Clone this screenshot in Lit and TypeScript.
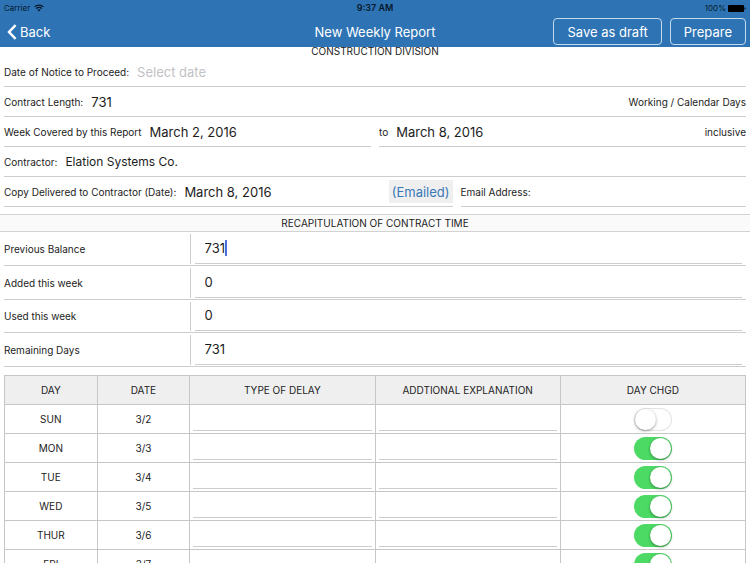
import { LitElement, html, css, svg } from "lit";
import { customElement, property } from "lit/decorators.js";

const font = css`
  *, *::before { box-sizing: border-box; }
  input, button { font: inherit; color: inherit; margin: 0; border-radius: 0; }
`;

@customElement("status-bar")
class StatusBar extends LitElement {
  static styles = css`
    :host {
      display: grid;
      grid-template-columns: 1fr auto 1fr;
      align-items: center;
      height: 16px;
      padding: 0 4px;
      font-size: 8px;
      line-height: 16px;
      color: #06182b;
    }
    .side { display: flex; align-items: center; gap: 4px; }
    .end { justify-content: flex-end; gap: 2px; }
    .time { font-size: 9px; font-weight: 600; }
  `;
  render() {
    return html`
      <div class="side">
        <span>Carrier</span>
        <svg width="10" height="8" viewBox="0 0 10 8" aria-label="Wi-Fi">
          ${svg`<path d="M.6 2.9a6.2 6.2 0 0 1 8.8 0M2.2 4.6a4 4 0 0 1 5.6 0" fill="none" stroke="currentColor" stroke-width="1.3"/>
          <path d="M5 7.6 3.4 5.9a2.3 2.3 0 0 1 3.2 0Z" fill="currentColor"/>`}
        </svg>
      </div>
      <span class="time">9:37 AM</span>
      <div class="side end">
        <span>100%</span>
        <svg width="18" height="7" viewBox="0 0 18 7" aria-label="Battery full">
          ${svg`<rect x="0" y="0" width="16" height="7" rx="1" fill="#000"/>
          <path d="M16.5 2.2c1.3.3 1.3 2.3 0 2.6Z" fill="#000"/>`}
        </svg>
      </div>
    `;
  }
}

@customElement("nav-bar")
class NavBar extends LitElement {
  static styles = [font, css`
    :host {
      display: grid;
      grid-template-columns: 1fr auto 1fr;
      align-items: center;
      height: 31px;
      padding: 0 4px;
      font-size: 13px;
      color: #fff;
    }
    .title { font-size: 13px; font-weight: 400; margin: 0; }
    .back {
      display: flex;
      align-items: center;
      justify-self: start;
      gap: 3px;
      padding: 0 3px;
      border: 0;
      background: none;
      color: #fff;
    }
    .actions { display: flex; justify-content: flex-end; gap: 8px; }
    .action {
      height: 27px;
      padding: 0 13px;
      border: 1px solid #c4daee;
      border-radius: 4px;
      background: none;
      color: #fff;
      white-space: nowrap;
    }
  `];
  render() {
    return html`
      <button class="back">
        <svg width="10" height="16" viewBox="0 0 10 16" aria-hidden="true">
          ${svg`<path d="M8.6 1.2 2 8l6.6 6.8" fill="none" stroke="currentColor" stroke-width="2.4"/>`}
        </svg>
        Back
      </button>
      <h1 class="title">New Weekly Report</h1>
      <div class="actions">
        <button class="action">Save as draft</button>
        <button class="action">Prepare</button>
      </div>
    `;
  }
}

@customElement("report-field")
class ReportField extends LitElement {
  @property() label = "";
  @property() value = "";
  @property() hint = "";
  @property() suffix = "";
  @property() action = "";
  @property({ type: Boolean }) prose = false;

  static styles = [font, css`
    :host { display: block; min-width: 0; }
    .field {
      display: flex;
      align-items: center;
      gap: 8px;
      height: 30px;
      border-bottom: 1px solid #cdcdcd;
    }
    .label, .suffix { white-space: nowrap; }
    .input {
      flex: 1;
      min-width: 0;
      height: 24px;
      padding: 0;
      border: 0;
      outline: 0;
      background: none;
      font-size: 13px;
    }
    .prose { font-size: 12px; }
    .input::placeholder { color: #c2c2c6; opacity: 1; }
    .action {
      height: 23px;
      padding: 0 3px;
      border: 0;
      background: #efeff0;
      color: #3a78b8;
      font-size: 13px;
    }
  `];
  render() {
    return html`
      <div class="field">
        <label class="label" for="value">${this.label}</label>
        <input class="input ${this.prose ? "prose" : ""}" id="value" .value=${this.value} placeholder=${this.hint} />
        ${this.suffix ? html`<span class="suffix">${this.suffix}</span>` : ""}
        ${this.action ? html`<button class="action">${this.action}</button>` : ""}
      </div>
    `;
  }
}

const balances = [
  { label: "Previous Balance", value: "731", active: true },
  { label: "Added this week", value: "0", active: false },
  { label: "Used this week", value: "0", active: false },
  { label: "Remaining Days", value: "731", active: false },
];

const days = [
  { day: "SUN", date: "3/2", charged: false },
  { day: "MON", date: "3/3", charged: true },
  { day: "TUE", date: "3/4", charged: true },
  { day: "WED", date: "3/5", charged: true },
  { day: "THUR", date: "3/6", charged: true },
  { day: "FRI", date: "3/7", charged: true },
  { day: "SAT", date: "3/8", charged: true },
];

@customElement("app-root")
class AppRoot extends LitElement {
  static styles = [font, css`
    :host {
      display: flex;
      flex-direction: column;
      height: 100vh;
      background: #fff;
      color: #1c1c1c;
      font: 10px/16px Inter, "Liberation Sans", sans-serif;
    }
    .top { background: #2e74b5; }
    .report {
      flex: 1;
      min-height: 0;
      overflow: hidden auto;
      scrollbar-width: none;
    }
    .division {
      margin: 0;
      padding-bottom: 2px;
      font-size: 10px;
      font-weight: 400;
      line-height: 8px;
      text-align: center;
    }
    .fields { padding: 0 4px; }
    .pair { display: grid; grid-template-columns: 1fr 1fr; column-gap: 8px; }
    .copy { grid-template-columns: 11fr 7fr; }
    .section {
      margin: 7px 0 0;
      height: 18px;
      border-top: 1px solid #d2d2d2;
      border-bottom: 1px solid #d2d2d2;
      background: #fafafa;
      font-size: 10px;
      font-weight: 400;
      text-align: center;
    }
    .balances {
      display: grid;
      grid-template-rows: repeat(4, 1fr);
      height: 135px;
      padding: 0 4px;
    }
    .balance {
      display: grid;
      grid-template-columns: 1fr 3fr;
      padding: 2px 0 1px;
      border-bottom: 1px solid #cdcdcd;
    }
    .name { align-self: center; }
    .amount { display: flex; padding: 0 4px; border-left: 1px solid #cdcdcd; }
    .entry {
      flex: 1;
      display: flex;
      align-items: center;
      padding: 0 10px 1px;
      border-bottom: 1px solid #cdcdcd;
    }
    .number {
      flex: 1;
      min-width: 0;
      padding: 0;
      border: 0;
      outline: 0;
      background: none;
      font-size: 13px;
    }
    .fitted { flex: none; field-sizing: content; caret-color: transparent; }
    .caret { width: 2px; height: 16px; background: #4a6fdc; }
    .sheet { padding: 8px 4px 0; }
    .days {
      width: 100%;
      border-collapse: collapse;
      table-layout: fixed;
    }
    .days th, .days td {
      height: 29px;
      padding: 0 3px;
      border: 1px solid #c6c6c6;
      font-weight: 400;
      text-align: center;
    }
    .days th { background: #efeff0; }
    .narrow { width: 12.5%; }
    .wide { width: 25%; }
    .note {
      display: block;
      width: 100%;
      height: 24px;
      padding: 0 8px;
      border: 0;
      border-bottom: 1px solid #cdcdcd;
      outline: 0;
      background: none;
    }
    .switch {
      appearance: none;
      display: block;
      width: 38px;
      height: 23px;
      margin: 0 auto;
      padding: 1px;
      border-radius: 12px;
      background: #fff;
      box-shadow: inset 0 0 0 1px #e4e4e4;
    }
    .switch::before {
      content: "";
      display: block;
      width: 21px;
      height: 21px;
      border-radius: 50%;
      background: #fff;
      box-shadow: 0 1px 3px rgba(0, 0, 0, 0.4);
    }
    .switch:checked { background: #4cd964; box-shadow: none; }
    .switch:checked::before { margin-left: auto; }
  `];

  render() {
    return html`
      <header class="top">
        <status-bar></status-bar>
        <nav-bar></nav-bar>
      </header>
      <main class="report">
        <h2 class="division">CONSTRUCTION DIVISION</h2>
        <div class="fields">
          <report-field label="Date of Notice to Proceed:" hint="Select date"></report-field>
          <report-field label="Contract Length:" value="731" suffix="Working / Calendar Days"></report-field>
          <div class="pair">
            <report-field label="Week Covered by this Report" value="March 2, 2016"></report-field>
            <report-field label="to" value="March 8, 2016" suffix="inclusive"></report-field>
          </div>
          <report-field label="Contractor:" value="Elation Systems Co." prose></report-field>
          <div class="pair copy">
            <report-field label="Copy Delivered to Contractor (Date):" value="March 8, 2016" action="(Emailed)"></report-field>
            <report-field label="Email Address:"></report-field>
          </div>
        </div>
        <h2 class="section">RECAPITULATION OF CONTRACT TIME</h2>
        <div class="balances">
          ${balances.map((b, i) => html`
            <div class="balance">
              <label class="name" for="balance-${i}">${b.label}</label>
              <div class="amount">
                <div class="entry">
                  <input class="number ${b.active ? "fitted" : ""}" id="balance-${i}" .value=${b.value} />
                  ${b.active ? html`<span class="caret"></span>` : ""}
                </div>
              </div>
            </div>
          `)}
        </div>
        <div class="sheet">
          <table class="days">
            <thead>
              <tr>
                <th class="narrow">DAY</th>
                <th class="narrow">DATE</th>
                <th class="wide">TYPE OF DELAY</th>
                <th class="wide">ADDTIONAL EXPLANATION</th>
                <th class="wide">DAY CHGD</th>
              </tr>
            </thead>
            <tbody>
              ${days.map((d) => html`
                <tr>
                  <td>${d.day}</td>
                  <td>${d.date}</td>
                  <td><input class="note" aria-label="Type of delay, ${d.day}" /></td>
                  <td><input class="note" aria-label="Explanation, ${d.day}" /></td>
                  <td><input class="switch" type="checkbox" role="switch" aria-label="Day charged, ${d.day}" .checked=${d.charged} /></td>
                </tr>
              `)}
            </tbody>
          </table>
        </div>
      </main>
    `;
  }
}
